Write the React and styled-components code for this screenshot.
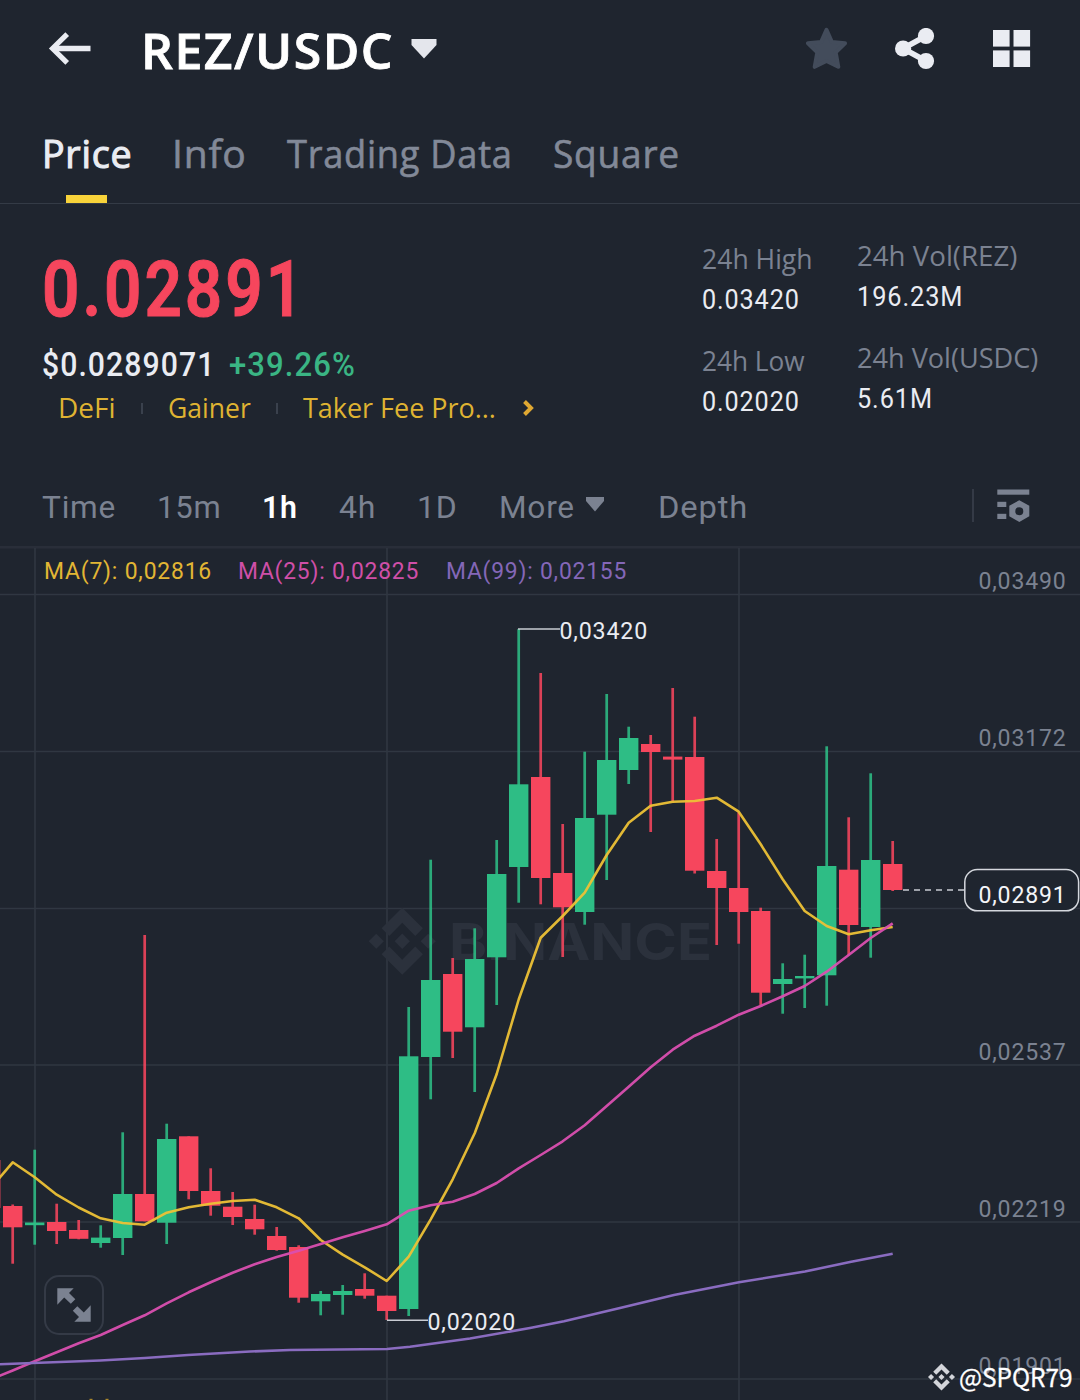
import React, { useLayoutEffect, useRef, useState } from 'react'
import styled, { createGlobalStyle } from 'styled-components'

const GlobalStyle = createGlobalStyle`
body {
  margin: 0;
  background-color: #1f252f;
}
* {
  box-sizing: border-box;
}
`;

const SANS = `"Open Sans", "Noto Sans", sans-serif`;
const DIGITS = `Roboto, "Liberation Sans", sans-serif`;

const Page = styled.div`
width: 1080px;
height: 1400px;
overflow: hidden;
display: flex;
flex-direction: column;
background-color: #1f252f;
color: #eaecf2;
font-family: ${SANS};
`;

/* text squeezed to a fixed column width */
const FitBox = styled.div`
width: ${props => props.$width}px;
flex: none;
white-space: nowrap;
`;
const FitInner = styled.span`
display: inline-block;
transform-origin: left center;
`;

const Fit = ({ width, children }) => {
    const ref = useRef(null)
    const [scale, setScale] = useState(1)
    useLayoutEffect(() => {
        setScale(width / ref.current.offsetWidth)
    }, [width, children])
    return (
        <FitBox $width={width}>
            <FitInner ref={ref} style={{ transform: `scaleX(${scale})` }}>{children}</FitInner>
        </FitBox>
    )
}

const Header = styled.header`
height: 98px;
flex: none;
display: flex;
align-items: center;
padding: 0 49px 0 48px;
`;
const Title = styled.div`
margin-left: 50px;
margin-right: 17px;
padding-top: 2px;
font-size: 49px;
line-height: 60px;
font-weight: 600;
letter-spacing: 0.03em;
color: #fff;
-webkit-text-stroke: 0.8px currentColor;
`;
const HeaderIcons = styled.div`
margin-left: auto;
display: flex;
align-items: center;
gap: 47px;
`;
const GridIcon = styled.svg`
margin-left: 9px;
`;

const Tabs = styled.nav`
height: 106px;
flex: none;
display: flex;
gap: 40px;
padding-left: 42px;
border-bottom: 1px solid #343b46;
`;
const Tab = styled.div`
display: flex;
flex-direction: column;
align-items: center;
justify-content: space-between;
padding-top: 29px;
font-size: 38px;
line-height: 52px;
letter-spacing: 0.02em;
color: ${props => props.$active ? '#eaecf2' : '#828998'};
-webkit-text-stroke: ${props => props.$active ? 1.1 : 0.6}px currentColor;
`;
const TabBar = styled.div`
width: 41px;
height: 8px;
margin-right: 2px;
background-color: #f8d33a;
`;

const Ticker = styled.section`
height: 262px;
flex: none;
display: flex;
padding-left: 42px;
`;
const Quote = styled.div`
width: 660px;
padding-top: 47px;
`;
const LastPrice = styled.div`
font-family: ${DIGITS};
font-size: 77px;
line-height: 78px;
font-weight: 600;
letter-spacing: 0.045em;
color: #f6465d;
-webkit-text-stroke: 1px currentColor;
`;
const SubPrice = styled.div`
display: flex;
gap: 14px;
margin-top: 16px;
font-family: ${DIGITS};
font-size: 33.5px;
line-height: 40px;
font-weight: 500;
letter-spacing: 0.035em;
`;
const Change = styled.div`
color: #3ab584;
`;
const Tags = styled.div`
display: flex;
align-items: center;
margin-top: 5px;
padding-left: 16px;
font-size: 27.5px;
line-height: 36px;
color: #dfb332;
`;
const TagDivider = styled.div`
width: 2px;
height: 11px;
margin: 0 25px;
background-color: #3a414d;
`;
const TagMore = styled.div`
display: flex;
margin-left: 26px;
`;

const StatColumn = styled.div`
width: 155px;
flex: none;
padding-top: ${props => props.$top}px;
`;
const Stat = styled.div`
margin-bottom: 18px;
`;
const StatLabel = styled.div`
font-size: 28px;
line-height: 40px;
color: #7b8291;
`;
const StatValue = styled.div`
font-family: ${DIGITS};
font-size: 28px;
line-height: 44px;
letter-spacing: 0.035em;
color: #eaecf2;
`;

const Intervals = styled.nav`
height: 80px;
flex: none;
display: flex;
align-items: center;
gap: 41px;
padding: 2px 50px 0 42px;
font-family: ${DIGITS};
font-size: 32px;
line-height: 40px;
letter-spacing: 0.025em;
`;
const Interval = styled.div`
display: flex;
align-items: center;
gap: 11px;
margin-left: ${props => props.$space || 0}px;
font-weight: ${props => props.$active ? 600 : 400};
color: ${props => props.$active ? '#fff' : '#7b8291'};

svg {
  margin-top: -5px;
}
`;
const Settings = styled.div`
display: flex;
align-items: center;
gap: 23px;
margin-left: auto;
margin-top: -4px;
`;
const SettingsDivider = styled.div`
width: 2px;
height: 33px;
background-color: #343a46;
`;

const ChartArea = styled.section`
position: relative;
height: 854px;
flex: none;
`;
const ChartSvg = styled.svg`
display: block;
`;
const ExpandButton = styled.button`
position: absolute;
left: 44px;
top: 729px;
width: 60px;
height: 60px;
padding: 0;
border: 2.5px solid #343a46;
border-radius: 15px;
background-color: transparent;
display: flex;
align-items: center;
justify-content: center;
`;
const Credit = styled.div`
position: absolute;
right: 7px;
bottom: 7px;
display: flex;
align-items: center;
gap: 4px;
font-family: "Noto Sans CJK SC", "Noto Sans", sans-serif;
font-size: 25px;
line-height: 34px;
color: #fff;
-webkit-text-stroke: 0.3px currentColor;
`;
const CreditName = styled.div`
margin-top: -2px;
`;

const tabs = [
    { label: 'Price', width: 90, active: true },
    { label: 'Info', width: 75 },
    { label: 'Trading Data', width: 226 },
    { label: 'Square', width: 127 },
]

const stats = [
    {
        top: 34,
        items: [
            { label: '24h High', labelWidth: 111, value: '0.03420', valueWidth: 98 },
            { label: '24h Low', labelWidth: 103, value: '0.02020', valueWidth: 98 },
        ],
    },
    {
        top: 31,
        items: [
            { label: '24h Vol(REZ)', labelWidth: 160, value: '196.23M', valueWidth: 106 },
            { label: '24h Vol(USDC)', labelWidth: 181, value: '5.61M', valueWidth: 76 },
        ],
    },
]

const intervals = [
    { label: 'Time', width: 74 },
    { label: '15m', width: 64 },
    { label: '1h', width: 36, active: true },
    { label: '4h', width: 37 },
    { label: '1D', width: 41 },
    { label: 'More', width: 76, caret: true },
    { label: 'Depth', width: 90, space: 13 },
]

const UP = '#2ebd85'
const DOWN = '#f6465d'
const FIRST_X = 12.7
const STEP = 22

// [direction, body top, body bottom, wick top, wick bottom]
const candles = [
    ['d', 1206, 1227.3, 1204.5, 1263.7],
    ['u', 1222.5, 1225.2, 1149.7, 1244.7],
    ['d', 1222, 1231, 1203.7, 1244],
    ['d', 1230, 1238.8, 1220, 1239.3],
    ['u', 1237.6, 1243, 1225.3, 1247.7],
    ['u', 1194, 1238, 1132.3, 1255],
    ['d', 1194, 1221.3, 935, 1221.3],
    ['u', 1139, 1222.7, 1123.7, 1244],
    ['d', 1136.3, 1191, 1136.3, 1199.3],
    ['d', 1191, 1205.7, 1168.3, 1215.7],
    ['d', 1206.7, 1217, 1192, 1225],
    ['d', 1219, 1229.3, 1204.7, 1234.7],
    ['d', 1236, 1250, 1227, 1250.7],
    ['d', 1247, 1297.7, 1245.3, 1302.7],
    ['u', 1294, 1301.3, 1291, 1315.3],
    ['u', 1291, 1295, 1285, 1314.7],
    ['d', 1289, 1295.7, 1273.3, 1298.7],
    ['d', 1295.7, 1311, 1295.7, 1320],
    ['u', 1056.3, 1309, 1007, 1316],
    ['u', 980, 1057, 859.7, 1099.3],
    ['d', 974, 1031.7, 958, 1058],
    ['u', 959, 1027.3, 928.3, 1092],
    ['u', 874, 957.3, 840, 1005],
    ['u', 784.3, 867, 629, 902.7],
    ['d', 777, 878, 673, 904.3],
    ['d', 873, 907.3, 824, 957],
    ['u', 818, 912, 751.7, 924.7],
    ['u', 760, 814.7, 694, 880],
    ['u', 738, 770, 726.7, 784],
    ['d', 744, 752, 735, 832],
    ['d', 756.6, 759.6, 688, 801],
    ['d', 757, 870.7, 716.7, 873.5],
    ['d', 871, 888, 839, 945],
    ['d', 888, 912, 812.3, 943.7],
    ['d', 911, 992.7, 907.7, 1005],
    ['u', 979, 984, 963.3, 1013.7],
    ['u', 976, 978.4, 954.7, 1008],
    ['u', 866, 975.3, 746.3, 1005.7],
    ['d', 869.7, 925, 817.3, 955.3],
    ['u', 860, 927, 773.3, 957.7],
    ['d', 864, 890, 841, 891],
]

// one value per candle, from the candle left of the screen
const ma7 = [
    1188, 1162.3, 1177.3, 1194.7, 1207.5, 1218.3, 1223, 1224.7, 1212.7, 1207.3, 1203.7, 1201, 1199.7, 1207.3,
    1218.3, 1240, 1254.7, 1267.3, 1281, 1256.7, 1219.3, 1179.3, 1133.3, 1074, 999.5, 937.7, 916, 892.7, 855,
    822.7, 805.7, 801.7, 801, 797.7, 811.7, 844.3, 879.3, 911, 926, 934.3, 930.3, 927,
]
const ma25 = [
    1379.5, 1370.5, 1361.3, 1352.3, 1343.3, 1335, 1325, 1315.3, 1303.3, 1292.3, 1282.3, 1272.7, 1264.3, 1257,
    1250.7, 1244, 1237.3, 1231, 1224.3, 1210.7, 1205.3, 1201.7, 1194, 1183, 1168.3, 1155, 1141.3, 1125.3, 1106,
    1086.7, 1067.3, 1049.7, 1035.7, 1025.7, 1014.7, 1006, 996.3, 986, 971.7, 955, 938, 923.3,
]
const ma99 = '0,1364.3 33,1363 100,1360.5 145,1358 188,1355 250,1351.5 290,1350 387,1349 410,1346.7 470,1338.5 530,1328 564,1321.3 620,1308 674,1295 739,1282.3 805,1271.5 850,1262 892.7,1253.7'

const toPoints = values => values.map((y, i) => `${FIRST_X + (i - 1) * STEP},${y}`).join(' ')

const gridRows = [594.5, 751.5, 908.5, 1065, 1222, 1379]
const gridColumns = [35, 387, 739]

const axisLabels = [
    { y: 589, text: '0,03490' },
    { y: 746, text: '0,03172' },
    { y: 1060, text: '0,02537' },
    { y: 1217, text: '0,02219' },
    { y: 1374, text: '0,01901' },
]

const maLabels = [
    { x: 44, width: 168, text: 'MA(7): 0,02816', color: '#e2b634' },
    { x: 238, width: 181, text: 'MA(25): 0,02825', color: '#cf4fa8' },
    { x: 446, width: 181, text: 'MA(99): 0,02155', color: '#8467b8' },
]

const ChartText = ({ x, y, width, size = 24.3, color, children }) => (
    <text x={x} y={y} fontFamily={DIGITS} fontSize={size} fill={color} letterSpacing="0.035em"
        textLength={width} lengthAdjust="spacingAndGlyphs">{children}</text>
)

const LogoShapes = () => (
    <>
        <polygon points="38.7,53.2 63.3,28.6 87.9,53.2 102.2,38.9 63.3,0 24.4,38.9" />
        <polygon points="0,63.3 14.3,49 28.6,63.3 14.3,77.6" />
        <polygon points="38.7,73.4 63.3,98 87.9,73.4 102.2,87.7 63.3,126.6 24.4,87.7" />
        <polygon points="98,63.3 112.3,49 126.6,63.3 112.3,77.6" />
        <polygon points="77.8,63.3 63.3,48.8 48.8,63.3 63.3,77.8" />
    </>
)

const Candle = ({ index, data }) => {
    const [dir, top, bottom, high, low] = data
    const x = FIRST_X + index * STEP
    return (
        <g fill={dir === 'u' ? UP : DOWN}>
            <rect x={x - 1.35} y={high} width="2.7" height={low - high} opacity="0.88" />
            <rect x={x - 9.7} y={top} width="19.4" height={bottom - top} />
        </g>
    )
}

const Chart = () => {
    return (
        <ChartArea>
            <ChartSvg width="1080" height="854" viewBox="0 546 1080 854">
                <rect x="0" y="546" width="1080" height="2.6" fill="#292e39" />
                <g stroke="#303742" strokeWidth="1.6">
                    {gridRows.map(y => <line key={y} x1="0" x2="1080" y1={y} y2={y} />)}
                    {gridColumns.map(x => <line key={x} x1={x} x2={x} y1="548" y2="1400" />)}
                </g>

                <g fill="#2b313c">
                    <g transform="translate(368.7 907.7) scale(0.53)">
                        <LogoShapes />
                    </g>
                    <text x="449" y="960" fontFamily="Inter, sans-serif" fontSize="51.5" fontWeight="700"
                        textLength="263" lengthAdjust="spacingAndGlyphs">BINANCE</text>
                </g>

                {axisLabels.map(a => (
                    <ChartText key={a.text} x={978.5} y={a.y} width={88} color="#7b8291">{a.text}</ChartText>
                ))}

                <rect x="0" y="1160" width="0.8" height="48" fill={DOWN} opacity="0.5" />
                {candles.map((c, i) => <Candle key={i} index={i} data={c} />)}

                <g fill="none" strokeWidth="2.6" strokeLinejoin="round">
                    <polyline points={toPoints(ma7)} stroke="#edc136" opacity="0.95" />
                    <polyline points={toPoints(ma25)} stroke="#da4fb0" opacity="0.95" />
                    <polyline points={ma99} stroke="#8a6cc0" />
                </g>

                {maLabels.map(m => (
                    <ChartText key={m.text} x={m.x} y={579} width={m.width} size={23.5} color={m.color}>{m.text}</ChartText>
                ))}

                <g stroke="#c9ccd3" strokeWidth="1.6">
                    <line x1="518" x2="560" y1="629" y2="629" />
                    <line x1="387" x2="428" y1="1320.3" y2="1320.3" />
                    <line x1="903" x2="964" y1="890" y2="890" strokeDasharray="6 5" />
                </g>
                <ChartText x={559.5} y={638.7} width={88.5} color="#eaecf2">0,03420</ChartText>
                <ChartText x={427.5} y={1329.7} width={88.5} color="#eaecf2">0,02020</ChartText>

                <rect x="964.8" y="869.5" width="113.8" height="41.3" rx="12.5" fill="#1f252f" stroke="#d5d8de" strokeWidth="1.5" />
                <ChartText x={978.5} y={903} width={88} color="#f4f5f8">0,02891</ChartText>

                {/* tops of the next pane's legend */}
                <g fill="#a9872c">
                    <rect x="89.5" y="1398.8" width="3" height="1.2" />
                    <rect x="105.5" y="1398.8" width="3" height="1.2" />
                </g>
            </ChartSvg>

            <ExpandButton>
                <svg width="34" height="34" viewBox="0 0 34 34" fill="#7b8291">
                    <path d="M0.3 0.3H16.7L12 5L18.3 11.3L13.8 15.8L7.2 9.6L0.3 16.7Z" />
                    <path d="M33.7 33.7H17.3L22 29L15.8 22.7L20.3 18.2L26.8 24.4L33.7 17.3Z" />
                </svg>
            </ExpandButton>

            <Credit>
                <svg width="27" height="28" viewBox="0 0 126.6 126.6" fill="#d3d5da">
                    <LogoShapes />
                </svg>
                <CreditName>
                    <Fit width={114}>@SPQR79</Fit>
                </CreditName>
            </Credit>
        </ChartArea>
    )
}

const App = () => {
    return (
        <Page>
            <GlobalStyle />
            <Header>
                <svg width="43" height="34" viewBox="0 0 43 34" fill="none" stroke="#eaecf2">
                    <path d="M42.5 16.5H5" strokeWidth="5.4" />
                    <path d="M19.2 2.1L4.6 16.5L19.2 30.9" strokeWidth="5.2" />
                </svg>
                <Title>
                    <Fit width={253}>REZ/USDC</Fit>
                </Title>
                <svg width="26" height="20" viewBox="0 0 26 20" fill="#e4e6ec">
                    <path d="M0.5 0H25.5V6L13 19.5L0.5 6Z" />
                </svg>
                <HeaderIcons>
                    <svg width="42" height="44" viewBox="0 0 42 44" fill="#434c5b" stroke="#434c5b" strokeWidth="4" strokeLinejoin="round">
                        <path d="M20.5 2.8L25.8 14.9L39 16.2L29.7 25.3L32.3 39.8L20.5 34L8.7 39.8L11.3 25.3L2 16.2L15.2 14.9Z" />
                    </svg>
                    <svg width="42" height="42" viewBox="0 0 42 42" fill="#eaecf2">
                        <path d="M31 8L8 20.5L31 33" fill="none" stroke="#eaecf2" strokeWidth="5.6" />
                        <circle cx="31" cy="8" r="8.1" />
                        <circle cx="8.1" cy="20.5" r="8.1" />
                        <circle cx="31" cy="33" r="8.1" />
                    </svg>
                    <GridIcon width="38" height="38" viewBox="0 0 38 38" fill="#eaecf2">
                        <rect x="0" y="0" width="16.6" height="16.6" />
                        <rect x="20.5" y="0" width="16.6" height="16.6" />
                        <rect x="0" y="20.4" width="16.6" height="16.6" />
                        <rect x="20.5" y="20.4" width="16.6" height="16.6" />
                    </GridIcon>
                </HeaderIcons>
            </Header>

            <Tabs>
                {tabs.map(t => (
                    <Tab key={t.label} $active={t.active}>
                        <Fit width={t.width}>{t.label}</Fit>
                        {t.active && <TabBar />}
                    </Tab>
                ))}
            </Tabs>

            <Ticker>
                <Quote>
                    <LastPrice><Fit width={264}>0.02891</Fit></LastPrice>
                    <SubPrice>
                        <Fit width={173}>$0.0289071</Fit>
                        <Change><Fit width={127}>+39.26%</Fit></Change>
                    </SubPrice>
                    <Tags>
                        <Fit width={58}>DeFi</Fit>
                        <TagDivider />
                        <Fit width={83}>Gainer</Fit>
                        <TagDivider />
                        <Fit width={193}>Taker Fee Pro...</Fit>
                        <TagMore>
                            <svg width="14" height="16" viewBox="0 0 14 16" fill="none" stroke="#dfa832" strokeWidth="4">
                                <path d="M2.5 1.5L9 8L2.5 14.5" />
                            </svg>
                        </TagMore>
                    </Tags>
                </Quote>
                {stats.map(col => (
                    <StatColumn key={col.top} $top={col.top}>
                        {col.items.map(s => (
                            <Stat key={s.label}>
                                <StatLabel><Fit width={s.labelWidth}>{s.label}</Fit></StatLabel>
                                <StatValue><Fit width={s.valueWidth}>{s.value}</Fit></StatValue>
                            </Stat>
                        ))}
                    </StatColumn>
                ))}
            </Ticker>

            <Intervals>
                {intervals.map(t => (
                    <Interval key={t.label} $active={t.active} $space={t.space}>
                        <Fit width={t.width}>{t.label}</Fit>
                        {t.caret && (
                            <svg width="18" height="15" viewBox="0 0 18 15" fill="#7b8291">
                                <path d="M0 0H18V4L9 14.5L0 4Z" />
                            </svg>
                        )}
                    </Interval>
                ))}
                <Settings>
                    <SettingsDivider />
                    <svg width="33" height="33" viewBox="0 0 33 33" fill="#7b8291">
                        <rect x="0.3" y="0.5" width="32" height="5.2" />
                        <rect x="0.3" y="12.8" width="9" height="5.2" />
                        <rect x="0.3" y="24.8" width="9" height="5.2" />
                        <path fillRule="evenodd" d="M22.3 11.3L32.3 16.8V27.3L22.3 32.9L12.3 27.3V16.8ZM22.3 18.2A4 4 0 1 0 22.3 26.2A4 4 0 1 0 22.3 18.2Z" />
                    </svg>
                </Settings>
            </Intervals>

            <Chart />
        </Page>
    )
}

export default App
